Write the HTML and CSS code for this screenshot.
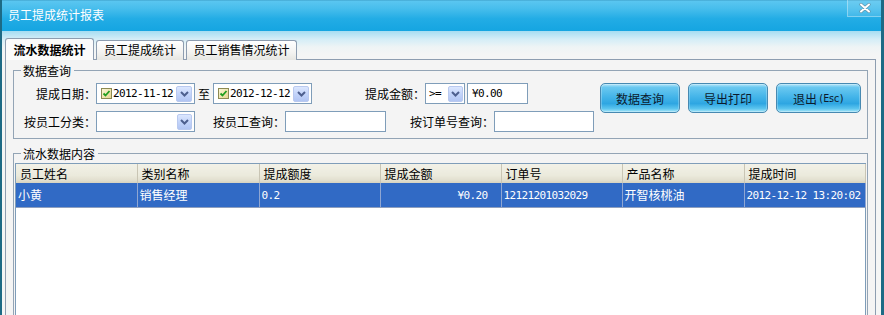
FILE: index.html
```html
<!DOCTYPE html>
<html lang="zh-CN">
<head>
<meta charset="utf-8">
<title>员工提成统计报表</title>
<link rel="stylesheet" href="styles.css">
</head>
<body>
<div class="window">
  <div class="titlebar">
    <span class="title">员工提成统计报表</span>
    <div class="close">
      <svg width="12" height="10" viewBox="0 0 12 10"><path d="M2 1.5 L10 8.5 M10 1.5 L2 8.5" fill="none" stroke="#5f8fa6" stroke-width="3.2" stroke-linecap="round"/><path d="M2 1.5 L10 8.5 M10 1.5 L2 8.5" fill="none" stroke="#ffffff" stroke-width="2" stroke-linecap="round"/></svg>
    </div>
  </div>
  <div class="client">
    <div class="tabs">
      <div class="tab tab-1">流水数据统计</div>
      <div class="tab tab-2">员工提成统计</div>
      <div class="tab tab-3">员工销售情况统计</div>
    </div>
    <div class="panel">
      <fieldset class="group group-query">
        <legend>数据查询</legend>
        <div class="query-body">
          <div class="form">
            <div class="row">
              <span class="lbl w82">提成日期：</span>
              <div class="field date w99">
                <span class="check"><svg width="9" height="9" viewBox="0 0 9 9"><path d="M1.5 4.5 L3.5 6.5 L7.5 2" fill="none" stroke="#1f9e1f" stroke-width="1.8"/></svg></span>
                <span class="num">2012-11-12</span>
                <span class="drop"><svg width="9" height="6" viewBox="0 0 9 6"><path d="M1 1 L4.5 4.5 L8 1" fill="none" stroke="#4d5f8e" stroke-width="2"/></svg></span>
              </div>
              <span class="lbl to">至</span>
              <div class="field date w99">
                <span class="check"><svg width="9" height="9" viewBox="0 0 9 9"><path d="M1.5 4.5 L3.5 6.5 L7.5 2" fill="none" stroke="#1f9e1f" stroke-width="1.8"/></svg></span>
                <span class="num">2012-12-12</span>
                <span class="drop"><svg width="9" height="6" viewBox="0 0 9 6"><path d="M1 1 L4.5 4.5 L8 1" fill="none" stroke="#4d5f8e" stroke-width="2"/></svg></span>
              </div>
              <span class="lbl w113">提成金额：</span>
              <div class="field op w40">
                <span class="num">&gt;=</span>
                <span class="drop drop-op"><svg width="9" height="6" viewBox="0 0 9 6"><path d="M1 1 L4.5 4.5 L8 1" fill="none" stroke="#4d5f8e" stroke-width="2"/></svg></span>
              </div>
              <div class="field money w61"><span class="num">¥0.00</span></div>
            </div>
            <div class="row">
              <span class="lbl w82">按员工分类：</span>
              <div class="field combo w99">
                <span class="drop drop-cb"><svg width="9" height="6" viewBox="0 0 9 6"><path d="M1 1 L4.5 4.5 L8 1" fill="none" stroke="#4d5f8e" stroke-width="2"/></svg></span>
              </div>
              <span class="lbl w90">按员工查询：</span>
              <div class="field w101"></div>
              <span class="lbl w108">按订单号查询：</span>
              <div class="field w100"></div>
            </div>
          </div>
          <div class="buttons">
            <div class="btn w80">数据查询</div>
            <div class="btn w80">导出打印</div>
            <div class="btn w85">退出<span class="esc">(Esc)</span></div>
          </div>
        </div>
      </fieldset>
      <fieldset class="group group-data">
        <legend>流水数据内容</legend>
        <div class="listview">
          <table>
            <colgroup>
              <col class="c121"><col class="c122"><col class="c121"><col class="c121"><col class="c121"><col class="c122"><col class="c121">
            </colgroup>
            <thead>
              <tr><th>员工姓名</th><th>类别名称</th><th>提成额度</th><th>提成金额</th><th>订单号</th><th>产品名称</th><th>提成时间</th></tr>
            </thead>
            <tbody>
              <tr class="selected">
                <td>小黄</td>
                <td>销售经理</td>
                <td><span class="num">0.2</span></td>
                <td class="right"><span class="num">¥0.20</span></td>
                <td><span class="num">12121201032029</span></td>
                <td>开智核桃油</td>
                <td><span class="num">2012-12-12 13:20:02</span></td>
              </tr>
            </tbody>
          </table>
        </div>
      </fieldset>
    </div>
  </div>
</div>
</body>
</html>
```

FILE: styles.css
```css
* { box-sizing: border-box; }
html, body { margin: 0; padding: 0; }
body {
  width: 884px;
  height: 315px;
  overflow: hidden;
  font-family: "Noto Sans CJK SC", "Noto Sans", sans-serif;
  font-size: 12px;
  color: #000;
  background: #f4f4f4;
}
.window {
  width: 884px;
  height: 315px;
  border-left: 2px solid #1d6a85;
  border-right: 3px solid #1d6a85;
  overflow: hidden;
  background: #f4f4f4;
  display: flex;
  flex-direction: column;
}
.titlebar {
  height: 31px;
  flex: none;
  display: flex;
  justify-content: space-between;
  align-items: center;
  padding-left: 6px;
  background: linear-gradient(to bottom, #3b9cc6 0, #5ac6f0 1px, #46bdec 9px, #22ace5 19px, #15a5e1 31px);
}
.title { color: #fff; line-height: 16px; margin-top: -1px; }
.close {
  align-self: flex-start;
  width: 34px;
  height: 17px;
  display: flex;
  align-items: center;
  justify-content: center;
  border-left: 1px solid rgba(255,255,255,.35);
  border-bottom: 1px solid rgba(255,255,255,.35);
  background: rgba(255,255,255,.1);
}
.client {
  flex: 1;
  padding: 7px 5px 0 3px;
  background: linear-gradient(to bottom, #a6ddf2 0, #d3edf7 8px, #eef4f5 16px, #f4f5f5 24px);
}
.tabs { display: flex; align-items: flex-end; height: 22px; }
.tab {
  height: 20px;
  line-height: 18px;
  text-align: center;
  border: 1px solid #8d9db0;
  border-bottom: none;
  border-radius: 3px 3px 0 0;
  background: linear-gradient(to bottom, #ffffff, #f3f3f1 60%, #e6e6e2);
  margin-left: 2px;
  white-space: nowrap;
}
.tab-1 {
  width: 89px;
  height: 22px;
  line-height: 21px;
  margin-left: 0;
  font-weight: bold;
  background: #fbfbfb;
  position: relative;
  z-index: 1;
}
.tab-2 { width: 88px; }
.tab-3 { width: 111px; }
.panel {
  margin-top: -1px;
  height: 270px;
  border: 1px solid #8d9db0;
  background: #f4f4f4;
  padding: 2px 7px 0 7px;
}
.group {
  margin: 0;
  padding: 0 0 6px 0;
  border: 1px solid #93a4b5;
  min-width: 0;
}
.group legend {
  margin-left: 7px;
  padding: 0 3px 0 2px;
  line-height: 17px;
  font-size: 12px;
}
.query-body { display: flex; margin-top: 4px; }
.form { width: 586px; display: flex; flex-direction: column; gap: 7px; }
.row { display: flex; height: 21px; align-items: center; }
.lbl { flex: none; text-align: right; white-space: nowrap; line-height: 21px; }
.lbl.to { width: 18px; text-align: center; }
.w82 { width: 82px; }
.w90 { width: 90px; }
.w108 { width: 108px; }
.w113 { width: 113px; }
.field {
  flex: none;
  height: 21px;
  border: 1px solid #7f9db9;
  background: #fff;
  display: flex;
  align-items: center;
}
.w40 { width: 40px; }
.w61 { width: 61px; }
.w99 { width: 99px; }
.w100 { width: 100px; }
.w101 { width: 101px; }
.date { padding-left: 4px; }
.check {
  flex: none;
  width: 11px;
  height: 11px;
  border: 1px solid #8d8a52;
  background: linear-gradient(135deg, #fbf6d6, #e4d690);
  display: flex;
  align-items: center;
  justify-content: center;
  margin-right: 1px;
}
.num {
  font-family: "DejaVu Sans Mono", "Liberation Mono", monospace;
  font-size: 11px;
  letter-spacing: -0.62px;
  white-space: nowrap;
}
.drop {
  flex: none;
  margin-left: auto;
  margin-right: 2px;
  width: 16px;
  height: 16px;
  border: 1px solid #b9c9ef;
  border-radius: 2px;
  background: linear-gradient(to bottom, #dce7fe, #c3d4fa 50%, #b1c5f3);
  display: flex;
  align-items: center;
  justify-content: center;
}
.op { padding-left: 3px; }
.drop-op { width: 15px; margin-right: 1px; }
.drop-cb { width: 15px; }
.money { margin-left: 2px; padding-left: 4px; }
.buttons { display: flex; gap: 8px; height: 30px; }
.btn {
  height: 30px;
  border: 1px solid #4789b1;
  border-radius: 5px;
  background: linear-gradient(to bottom, #b5e6f9 0, #6ac8f0 12%, #45b5e9 45%, #2ea6e2 70%, #5cc5ef 88%, #a9e6f8 100%);
  box-shadow: inset 0 0 0 1px rgba(255,255,255,.25);
  display: flex;
  align-items: center;
  justify-content: center;
  color: #0c1a2c;
  white-space: nowrap;
}
.w80 { width: 80px; }
.w85 { width: 85px; }
.esc { font-family: "DejaVu Sans Mono", monospace; font-size: 10px; letter-spacing: -0.8px; margin-left: 1px; }
.group-data { margin-top: 6px; height: 200px; }
.listview {
  margin: 1px 1px 0 1px;
  border: 1px solid #7f9db9;
  background: #fff;
  height: 190px;
}
.listview table {
  border-collapse: collapse;
  table-layout: fixed;
  width: 849px;
}
.c121 { width: 121px; }
.c122 { width: 122px; }
.listview th {
  height: 19px;
  padding: 0 4px;
  font-weight: normal;
  text-align: left;
  white-space: nowrap;
  background: linear-gradient(to bottom, #f2f1e7 0, #ebeadc 60%, #e2dfcf 85%, #d6d2c0 100%);
  border-right: 1px solid #c9c5b4;
  line-height: 18px;
}
.listview td {
  height: 23px;
  padding: 0 2px;
  white-space: nowrap;
  overflow: hidden;
  line-height: 22px;
}
.selected td {
  background: #316ac5;
  color: #fff;
  border-right: 1px solid #8fa6d2;
  border-bottom: 1px solid #8e9fbe;
}
.listview td.right { text-align: right; padding-right: 13px; }
```
